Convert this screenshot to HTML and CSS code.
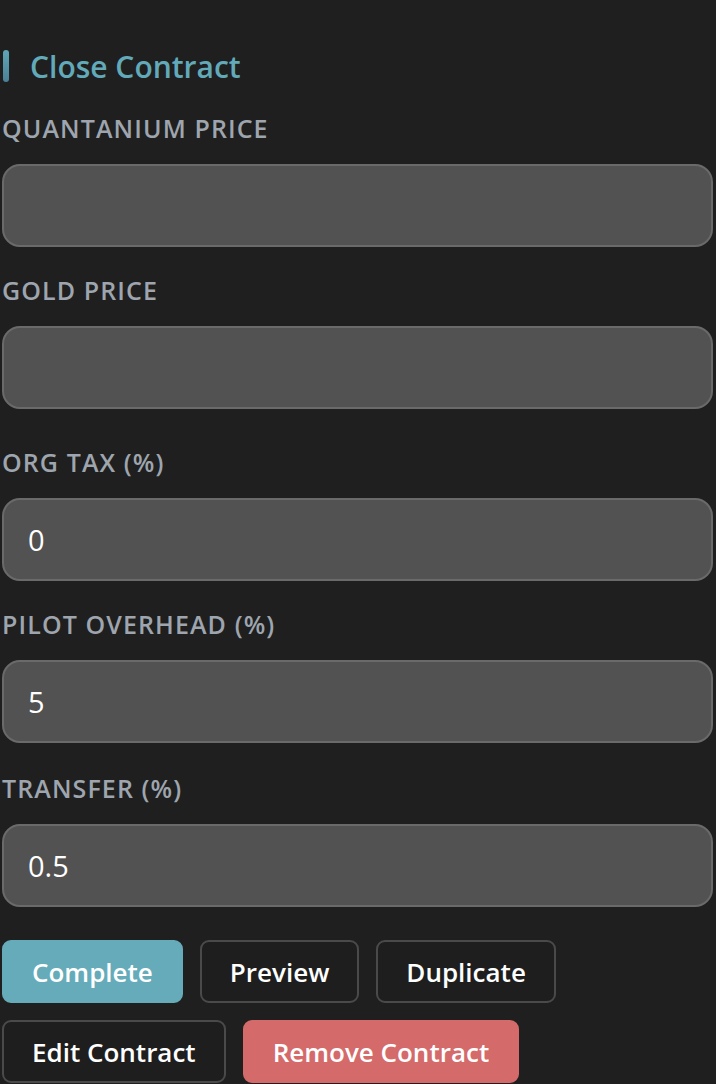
FILE: index.html
```html
<!DOCTYPE html>
<html lang="en">
<head>
    <meta charset="UTF-8">
    <meta name="viewport" content="width=device-width, initial-scale=1.0">
    <title>Close Contract</title>
    <link rel="stylesheet" href="styles.css">
</head>
<body>
    <div class="panel">
        <h2 class="section-title"><span class="bar"></span>Close Contract</h2>

        <div class="group">
            <div class="field">
                <label for="quantPrice">Quantanium Price</label>
                <input type="text" id="quantPrice" value="">
            </div>
            <div class="field">
                <label for="goldPrice">Gold Price</label>
                <input type="text" id="goldPrice" value="">
            </div>
        </div>

        <div class="group group-rates">
            <div class="field">
                <label for="orgTax">Org Tax (%)</label>
                <input type="text" id="orgTax" value="0">
            </div>
            <div class="field">
                <label for="pilotOverhead">Pilot Overhead (%)</label>
                <input type="text" id="pilotOverhead" value="5">
            </div>
            <div class="field">
                <label for="transfer">Transfer (%)</label>
                <input type="text" id="transfer" value="0.5">
            </div>
        </div>

        <div class="actions">
            <button class="btn btn-primary">Complete</button>
            <button class="btn">Preview</button>
            <button class="btn">Duplicate</button>
            <button class="btn">Edit Contract</button>
            <button class="btn btn-danger">Remove Contract</button>
        </div>
    </div>
</body>
</html>
```

FILE: styles.css
```css
* {
    margin: 0;
    padding: 0;
    box-sizing: border-box;
    font-family: "Open Sans", "Noto Sans", sans-serif;
}

body {
    background: #1f1f1f;
    color: white;
}

.panel {
    padding: 50px 3px 0 2px;
}

.section-title {
    display: flex;
    align-items: center;
    height: 32px;
    font-size: 30px;
    font-weight: 600;
    color: #62a9b9;
    margin-bottom: 32px;
}

.section-title .bar {
    width: 6px;
    height: 32px;
    margin-left: 1px;
    margin-right: 21px;
    border-radius: 3px;
    background: linear-gradient(to bottom, #5fa6b6, #4b8097);
}

.field {
    display: flex;
    flex-direction: column;
}

.field + .field {
    margin-top: 29px;
}

.group-rates {
    margin-top: 39px;
}

.group-rates .field:last-child {
    margin-top: 31px;
}

.field label {
    font-size: 25px;
    line-height: 28px;
    font-weight: 600;
    letter-spacing: 1.1px;
    text-transform: uppercase;
    color: #9ea5ae;
    margin-bottom: 22px;
}

.field input {
    height: 83px;
    width: 100%;
    background: #525252;
    border: 2px solid #6a6a6a;
    border-radius: 18px;
    padding: 0 24px;
    font-size: 29px;
    color: white;
    outline: none;
}

.actions {
    display: flex;
    flex-wrap: wrap;
    gap: 17px 17px;
    margin-top: 33px;
    width: 560px;
}

.btn {
    height: 63px;
    padding: 0 28px;
    background: #1e1e1e;
    border: 2px solid #4a4a4a;
    border-radius: 9px;
    color: white;
    font-size: 26px;
    font-weight: 600;
    cursor: pointer;
}

.btn-primary {
    background: #66abb9;
    border-color: #66abb9;
}

.btn-danger {
    background: #d46a6a;
    border-color: #d46a6a;
}
```
